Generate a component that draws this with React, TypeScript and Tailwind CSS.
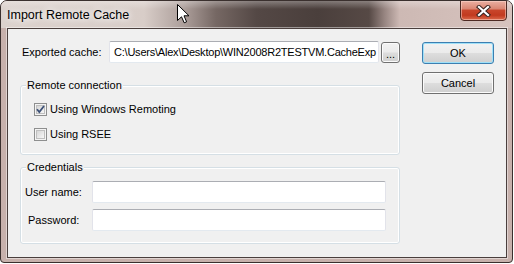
import React from 'react';

const uiFont = "font-['Liberation_Sans',Arial,sans-serif]";

function TextBox({ value, width, tight }: { value?: string; width: string; tight?: boolean }) {
  return (
    <div
      className={`${width} h-[22px] bg-white border border-[#e2e3ea] border-t-[#abadb3] border-b-[#e3e9ef] rounded-[2px] flex items-center px-[4px] overflow-hidden whitespace-nowrap ${
        tight ? 'tracking-[-0.22px]' : ''
      }`}
    >
      {value}
    </div>
  );
}

function CheckBox({ checked, label }: { checked?: boolean; label: string }) {
  return (
    <div className="flex items-center h-[13px]">
      <span className="relative block w-[13px] h-[13px] border border-[#8e8f8f] bg-[#f4f4f4] p-[1px]">
        <span className="block w-full h-full border border-[#bfbfbf] bg-gradient-to-br from-[#d6d6d6] to-[#f7f7f7]" />
        {checked && (
          <svg className="absolute left-0 top-0" width="11" height="11" viewBox="0 0 11 11">
            <path d="M2 5.2 L4.3 8 L9 2" fill="none" stroke="#3d5177" strokeWidth="1.8" />
          </svg>
        )}
      </span>
      <span className="ml-[3px] leading-[13px]">{label}</span>
    </div>
  );
}

function Button({ children, isDefault }: { children: React.ReactNode; isDefault?: boolean }) {
  return (
    <div
      className={`w-[72px] h-[22px] rounded-[3px] border flex items-center justify-center bg-[linear-gradient(#f2f2f2_0%,#ebebeb_48%,#dddddd_52%,#cfcfcf_100%)] ${
        isDefault
          ? 'border-[#3c7fb1] shadow-[inset_0_0_0_1px_#9fe0f8]'
          : 'border-[#707070] shadow-[inset_0_0_0_1px_#fbfbfb]'
      }`}
    >
      {children}
    </div>
  );
}

function GroupBox({ title, className, children }: { title: string; className: string; children: React.ReactNode }) {
  return (
    <div className={`relative border border-[#d5dfe5] rounded-[3px] shadow-[inset_0_0_0_1px_#ffffff] ${className}`}>
      <span className="absolute -top-[7px] left-[5px] px-[1px] leading-[13px] bg-[#f0f0f0]">{title}</span>
      {children}
    </div>
  );
}

export default function App() {
  return (
    <div className={`relative w-[514px] h-[264px] bg-white text-[11px] text-black ${uiFont}`}>
      <div className="relative w-[513px] h-[263px] border border-[#3a302e] rounded-t-[7px] rounded-b-[4px] bg-[#c7b1ac] flex flex-col overflow-hidden">
        {/* title bar */}
        <div className="h-[27px] shrink-0 flex items-center pl-[6px] pt-[1px] [background-image:linear-gradient(180deg,rgba(255,255,255,0.3)_0%,rgba(255,255,255,0)_30%,rgba(0,0,0,0)_100%),linear-gradient(90deg,#dcd2cd_0%,#d8cdc8_28%,#ab9d99_36%,#766864_42%,#544845_50%,#4a3f3c_62%,#564945_72%,#968480_75%,#cdb9b4_78%,#d7c3be_100%)]">
          <span className="text-[12.5px] leading-[16px] text-black [text-shadow:0_0_6px_#ffffff,0_0_10px_#ffffff]">
            Import Remote Cache
          </span>
        </div>

        {/* close button */}
        <div className="absolute -top-[1px] right-[5px] w-[47px] h-[21px] rounded-b-[4px] border border-[#4e2a23] flex items-center justify-center bg-[linear-gradient(#eab0a2_0%,#da8774_40%,#c8452a_50%,#c23a1f_75%,#dc6a4c_100%)] shadow-[inset_0_0_0_1px_rgba(255,220,210,0.5)]">
          <svg width="15" height="12" viewBox="0 0 15 12">
            <path d="M3 2 L12 10 M12 2 L3 10" stroke="#3a2420" strokeWidth="4.2" strokeLinecap="square" />
            <path d="M3 2 L12 10 M12 2 L3 10" stroke="#ffffff" strokeWidth="2.2" strokeLinecap="square" />
          </svg>
        </div>

        {/* client area */}
        <div className="flex-1 ml-[6px] mr-[5px] mb-[4px] bg-[#f0f0f0] border border-[#4a3f3d] shadow-[0_0_0_1px_rgba(255,255,255,0.45)] flex pl-[12px] pt-[12px]">
          <div className="w-[380px] flex flex-col">
            <div className="h-[22px] flex items-center">
              <span className="w-[89px] pl-[2px]">Exported cache:</span>
              <TextBox width="w-[270px]" value="C:\Users\Alex\Desktop\WIN2008R2TESTVM.CacheExp" tight />
              <div className="ml-[2px] self-start mt-[1px] w-[19px] h-[21px] rounded-[3px] border border-[#707070] shadow-[inset_0_0_0_1px_#fbfbfb] bg-[linear-gradient(#f2f2f2_0%,#ebebeb_48%,#dddddd_52%,#cfcfcf_100%)] flex items-end justify-center pb-[3px] leading-[10px]">
                ...
              </div>
            </div>

            <GroupBox title="Remote connection" className="mt-[22px] h-[70px] pt-[17px] pl-[13px]">
              <CheckBox checked label="Using Windows Remoting" />
              <div className="mt-[12px]">
                <CheckBox label="Using RSEE" />
              </div>
            </GroupBox>

            <GroupBox title="Credentials" className="mt-[12px] h-[77px] pt-[13px]">
              <div className="flex items-center">
                <span className="w-[71px] pl-[4px]">User name:</span>
                <TextBox width="w-[294px]" />
              </div>
              <div className="flex items-center mt-[6px]">
                <span className="w-[71px] pl-[7px]">Password:</span>
                <TextBox width="w-[294px]" />
              </div>
            </GroupBox>
          </div>

          <div className="ml-[22px] pt-[1px] flex flex-col gap-[8px]">
            <Button isDefault>OK</Button>
            <Button>Cancel</Button>
          </div>
        </div>
      </div>

      {/* mouse pointer */}
      <svg className="absolute left-[177px] top-[4px]" width="13" height="20" viewBox="0 0 13 20">
        <path
          d="M0.5 0.5 L0.5 16.5 L4.5 12.8 L7.2 18.8 L9.6 17.8 L7 11.8 L12 11.8 Z"
          fill="#ffffff"
          stroke="#000000"
          strokeWidth="1"
          strokeLinejoin="round"
        />
      </svg>
    </div>
  );
}
